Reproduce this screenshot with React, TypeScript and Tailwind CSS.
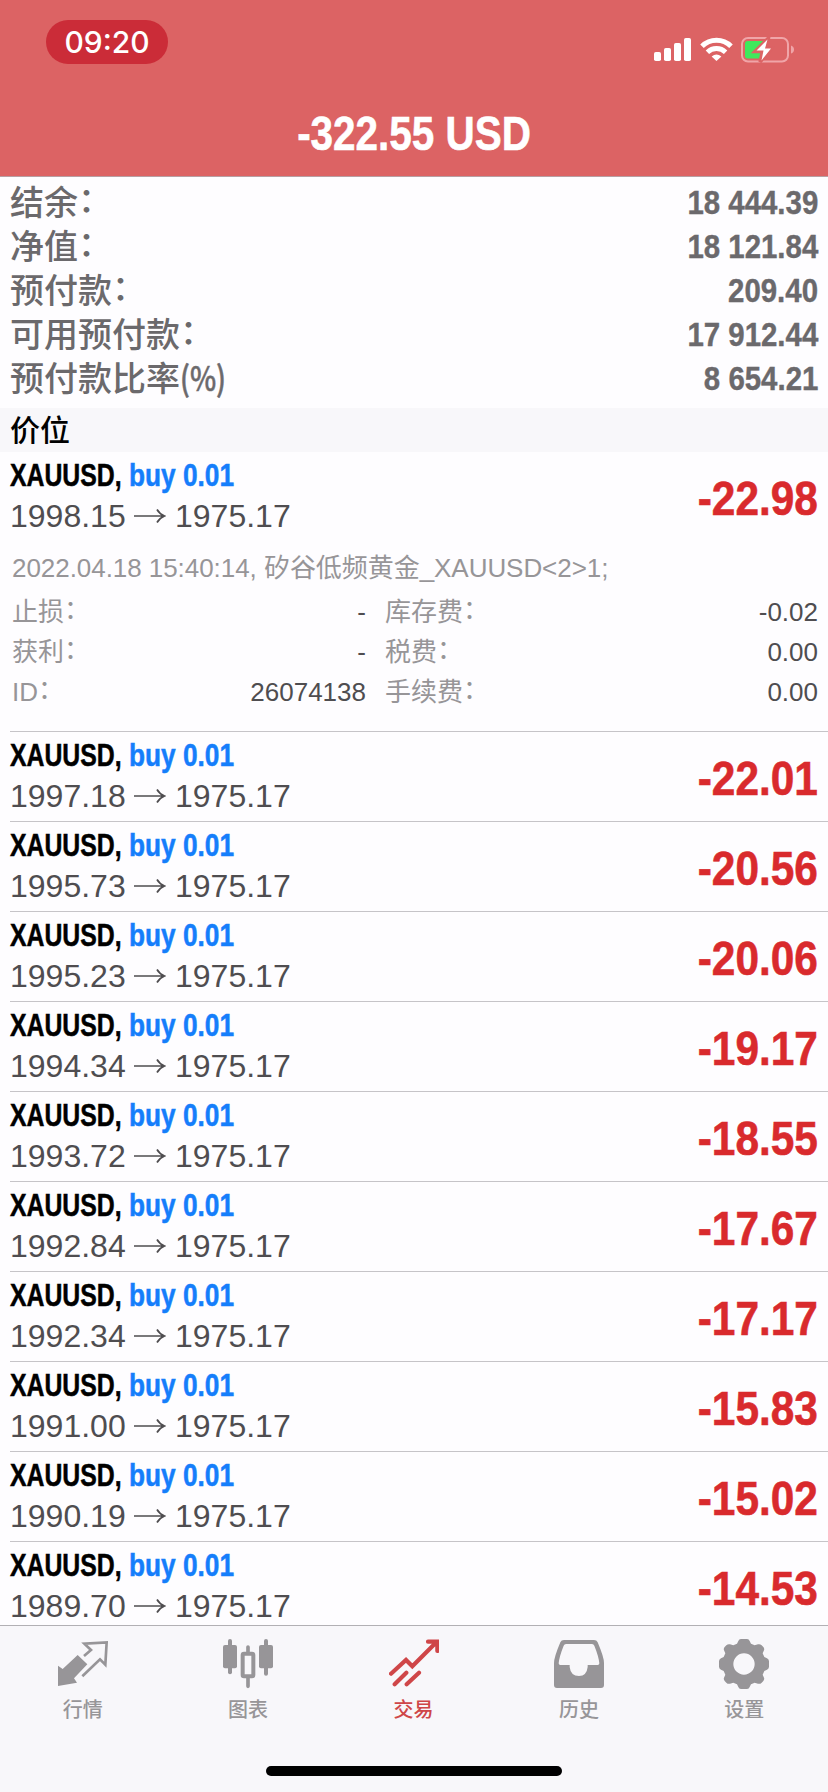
import type { ReactNode } from 'react'

const sans = "font-['Liberation_Sans','Noto_Sans_CJK_SC',sans-serif]"

const summary = [
  { label: '结余', suffix: '：', value: '18 444.39' },
  { label: '净值', suffix: '：', value: '18 121.84' },
  { label: '预付款', suffix: '：', value: '209.40' },
  { label: '可用预付款', suffix: '：', value: '17 912.44' },
  { label: '预付款比率', suffix: '(%)', value: '8 654.21' },
]

const positions = [
  { open: '1998.15', profit: '-22.98', expanded: true },
  { open: '1997.18', profit: '-22.01' },
  { open: '1995.73', profit: '-20.56' },
  { open: '1995.23', profit: '-20.06' },
  { open: '1994.34', profit: '-19.17' },
  { open: '1993.72', profit: '-18.55' },
  { open: '1992.84', profit: '-17.67' },
  { open: '1992.34', profit: '-17.17' },
  { open: '1991.00', profit: '-15.83' },
  { open: '1990.19', profit: '-15.02' },
  { open: '1989.70', profit: '-14.53' },
]

const details = [
  ['止损', '-', '库存费', '-0.02'],
  ['获利', '-', '税费', '0.00'],
  ['ID', '26074138', '手续费', '0.00'],
]

function StatusIcons() {
  return (
    <div className="flex items-start pt-[37px] pr-[33px]">
      <svg width="37" height="24" viewBox="0 0 37 24" fill="#fff" className="mr-[9px]">
        <rect x="0" y="15" width="7" height="9" rx="1.8" />
        <rect x="10" y="11" width="7" height="13" rx="1.8" />
        <rect x="20" y="6" width="7" height="18" rx="1.8" />
        <rect x="30" y="1" width="7" height="23" rx="1.8" />
      </svg>
      <svg width="33" height="25" viewBox="0 0 33 25" fill="none" stroke="#fff" className="mr-[8px]">
        <path d="M2 9.3A20.5 20.5 0 0 1 31 9.3" strokeWidth="5" />
        <path d="M7.4 15.2A13 13 0 0 1 25.6 15.2" strokeWidth="4.8" />
        <path d="M16.5 24L11.6 19.4Q16.5 15.6 21.4 19.4Z" fill="#fff" stroke="none" />
      </svg>
      <svg width="54" height="26" viewBox="0 0 54 26">
        <rect x="1" y="1" width="46" height="23.5" rx="6" fill="none" stroke="#f0a5a8" strokeWidth="2" />
        <rect x="4" y="4" width="20" height="17.5" rx="2.5" fill="#3fe85c" />
        <path d="M50 8.5q3 1 3 4t-3 4z" fill="#f0a5a8" />
        <path d="M27.5 1L14 14.5H21.5L19 25L30.5 11H25.5Z" fill="#fff" stroke="#dc6364" strokeWidth="3.5" />
        <path d="M26.5 2.5L15.5 13.5H22.5L20.5 23.5L30 11.5H24Z" fill="#fff" />
      </svg>
    </div>
  )
}

function Arrow() {
  return (
    <svg width="32" height="16" viewBox="0 0 32 16" fill="none" stroke="#4f4d50" strokeWidth="1.7">
      <path d="M0 8H30M23 1.5Q25.5 6 30.5 8Q25.5 10 23 14.5" />
    </svg>
  )
}

function Label({ children }: { children: string }) {
  return (
    <span>
      {children}
      <span className="inline-block -translate-y-[2px]">：</span>
    </span>
  )
}

function PositionRow({ open, profit, expanded }: { open: string; profit: string; expanded?: boolean }) {
  return (
    <div className={`ml-2.5 shrink-0 border-b border-[#c6c4c8] pt-[3px] pr-2.5 ${expanded ? 'h-[280px]' : 'h-[90px]'}`}>
      <div className="flex h-[82px] justify-between">
        <div>
          <div className="flex h-10 text-[32px] leading-[40px] font-bold whitespace-nowrap [-webkit-text-stroke:0.5px_currentColor]">
            <span className="w-[118px] origin-left scale-x-[0.775] text-black">XAUUSD,</span>
            <span className="ml-[1px] origin-left scale-x-[0.82] text-[#157efb]">buy 0.01</span>
          </div>
          <div className="flex h-[42px] items-center text-[32px] leading-[42px] text-[#4f4d50]">
            <span className="w-[124px]">{open}</span>
            <Arrow />
            <span className="ml-[9px]">1975.17</span>
          </div>
        </div>
        <div className="origin-right scale-x-[0.865] text-[49px] leading-[87px] font-bold text-[#d92a2d] [-webkit-text-stroke:0.6px_currentColor]">
          {profit}
        </div>
      </div>
      {expanded && (
        <div className="text-[26px] leading-[40px] text-[#979598]">
          <div className="mt-[11px] mb-1 ml-[2px] tracking-[-0.05px]">2022.04.18 15:40:14, 矽谷低频黄金_XAUUSD&lt;2&gt;1;</div>
          {details.map(([label, value, label2, value2]) => (
            <div key={label} className="flex">
              <span className="ml-0.5">
                <Label>{label}</Label>
              </span>
              <span className="ml-auto text-[#4f4d50]">{value}</span>
              <div className="ml-[19px] flex w-[433px] justify-between">
                <Label>{label2}</Label>
                <span className="text-[#4f4d50]">{value2}</span>
              </div>
            </div>
          ))}
        </div>
      )}
    </div>
  )
}

function Tab({ label, active, children }: { label: string; active?: boolean; children: ReactNode }) {
  return (
    <div className={`flex flex-1 flex-col items-center pt-[13px] ${active ? 'text-[#cf4648]' : 'text-[#979598]'}`}>
      <svg width="50" height="50" viewBox="0 0 150 150" fill="currentColor">
        {children}
      </svg>
      <span className="mt-[6px] text-[20px] leading-[30px] font-medium">{label}</span>
    </div>
  )
}

export default function App() {
  return (
    <div className={`flex h-[1792px] w-[828px] flex-col overflow-hidden bg-[#fefdff] ${sans}`}>
      {/* Header */}
      <header className="h-[177px] shrink-0 border-b border-[#b79fa3] bg-[#dc6364] text-white">
        <div className="flex h-[103px] justify-between">
          <div className="mt-5 ml-[46px] h-11 w-[122px] rounded-full bg-[#cb2c38] text-center font-['Inter'] text-[30px] leading-[44px] font-medium">
            09:20
          </div>
          <StatusIcons />
        </div>
        <h1 className="scale-x-[0.825] text-center text-[49px] leading-[61px] font-bold [-webkit-text-stroke:0.6px_currentColor]">
          -322.55 USD
        </h1>
      </header>

      {/* Account summary */}
      <section className="h-[231px] shrink-0 px-2.5 pt-[3px] text-[34px] leading-[44px] text-[#6b696c]">
        {summary.map((row) => (
          <div key={row.label} className="flex justify-between">
            <div className="flex translate-y-[1px] font-medium">
              <span>{row.label}</span>
              {row.suffix === '：' ? (
                <span className="-translate-y-[3px]">{row.suffix}</span>
              ) : (
                <span className="origin-left -translate-y-[2px] scale-x-[0.82] font-['Noto_Sans_CJK_SC'] [-webkit-text-stroke:0.5px_currentColor]">
                  {row.suffix}
                </span>
              )}
            </div>
            <span className="origin-right scale-x-[0.865] font-bold [-webkit-text-stroke:0.4px_currentColor]">{row.value}</span>
          </div>
        ))}
      </section>

      <div className="h-11 shrink-0 bg-[#f8f7fa] px-2.5 text-[30px] leading-[46px] font-medium text-black">价位</div>

      {/* Open positions */}
      <main className="flex min-h-0 flex-1 flex-col overflow-hidden">
        {positions.map((p) => (
          <PositionRow key={p.open} {...p} />
        ))}
      </main>

      {/* Tab bar */}
      <nav className="flex h-[167px] shrink-0 flex-col border-t border-[#b2b0b4] bg-[#f8f7fa]">
        <div className="flex pr-[1px]">
          <Tab label="行情">
            <path d="M0 80L14 90L59 48L88 76L48 118L57 131L0 141Z" />
            <path d="M78 51L99 33L79 14L146 10L142 77L126 61L73 112" fill="none" stroke="currentColor" strokeWidth="8" />
          </Tab>
          <Tab label="图表">
            <rect x="0" y="18" width="42" height="70" rx="6" />
            <rect x="15" y="0" width="12" height="106" rx="6" />
            <rect x="108" y="18" width="42" height="70" rx="6" />
            <rect x="123" y="0" width="12" height="110" rx="6" />
            <rect x="59" y="44" width="32" height="68" rx="4" fill="none" stroke="currentColor" strokeWidth="12" />
            <path d="M75 24V42M75 114V142" stroke="currentColor" strokeWidth="11" strokeLinecap="round" />
          </Tab>
          <Tab label="交易" active>
            <path
              d="M6 104L51 63L70 82L142 10M117 8H145V36M17 136L52 101M53 136L90 101"
              fill="none"
              stroke="currentColor"
              strokeWidth="12.5"
              strokeLinecap="round"
            />
          </Tab>
          <Tab label="历史">
            <path
              fillRule="evenodd"
              d="M30 3H120Q128 3 131 10Q150 55 150 72V138Q150 147 141 147H9Q0 147 0 138V72Q0 55 19 10Q22 3 30 3ZM36 15Q31 15 29 20Q16 52 14 73Q14 78 19 78H47V84Q50 111 75 111Q98 111 101 84V78H131Q136 78 136 73Q134 52 121 20Q119 15 114 15Z"
            />
          </Tab>
          <Tab label="设置">
            <path
              fillRule="evenodd"
              d="M66 0H84Q90 0 92 6L96 14L107 19L117 16Q123 14 128 19L133 24Q137 29 135 34L131 43L136 54L144 58Q150 61 150 67V83Q150 89 144 92L136 96L131 107L135 116Q137 121 133 126L128 131Q123 136 117 134L107 131L96 136L92 144Q90 150 84 150H66Q60 150 58 144L54 136L43 131L33 134Q27 136 22 131L17 126Q13 121 15 116L19 107L14 96L6 92Q0 89 0 83V67Q0 61 6 58L14 54L19 43L15 34Q13 29 17 24L22 19Q27 14 33 16L43 19L54 14L58 6Q60 0 66 0ZM75 43A32 32 0 1 0 75 107A32 32 0 1 0 75 43Z"
            />
          </Tab>
        </div>
        <div className="mt-auto mb-4 h-2.5 w-[296px] self-center rounded-full bg-black" />
      </nav>
    </div>
  )
}
